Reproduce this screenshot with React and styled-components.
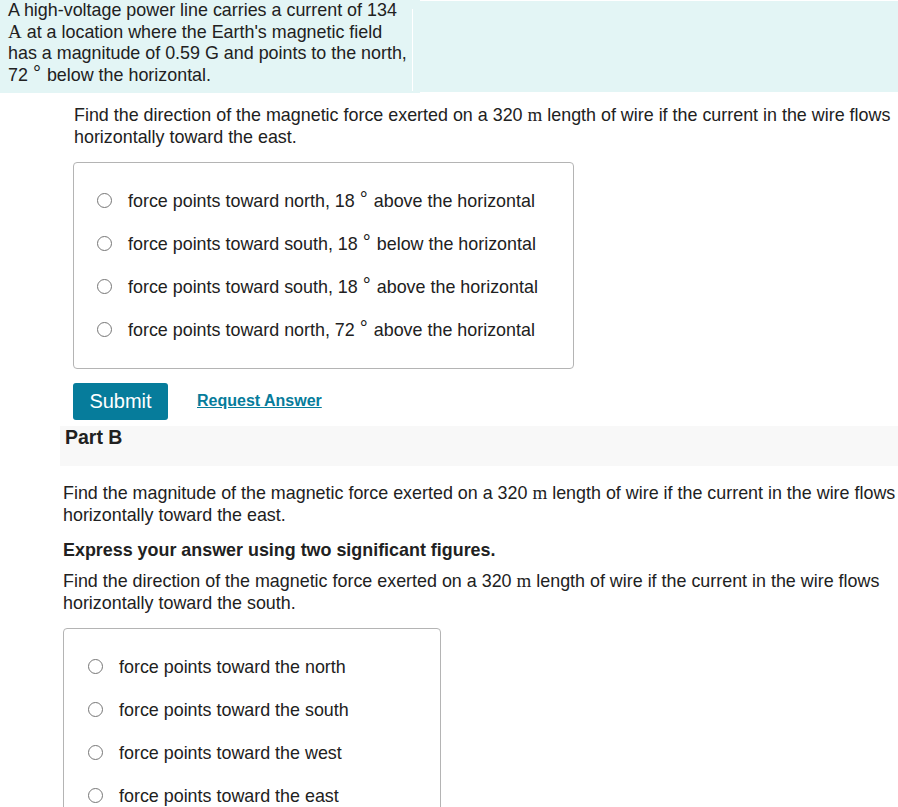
import React from "react";
import styled, { createGlobalStyle } from "styled-components";

const GlobalStyle = createGlobalStyle`
	body {
		margin: 0;
		background: #fff;
		font-family: "Liberation Sans", Arial, sans-serif;
		font-size: 17.9px;
		color: #212121;
	}
`;

const Page = styled.div`
	width: 898px;
	overflow: hidden;
`;

const IntroRow = styled.div`
	display: flex;
	align-items: stretch;
`;

const Intro = styled.div`
	position: relative;
	width: 405px;
	flex: none;
	padding: 0 7px 7px 8px;
	background: #e3f5f5;
	line-height: 21.5px;
	white-space: nowrap;

	&::after {
		content: "";
		position: absolute;
		right: 7px;
		top: 9px;
		bottom: 2px;
		width: 1px;
		background: #fff;
	}
`;

const IntroFill = styled.div`
	flex: 1;
	margin: 1px 0;
	background: #e3f5f5;
`;

const Math = styled.span`
	font-family: "Liberation Serif", "Times New Roman", serif;
	font-size: 19px;
	line-height: 0;
`;

const Deg = styled.span`
	font-size: 20px;
	line-height: 0;
	vertical-align: 1px;
	margin: 0 6px 0 5px;
`;

const Section = styled.div`
	padding-left: ${ props => props.indent }px;
`;

const Prompt = styled.p`
	margin: ${ props => props.top }px 0 0;
	line-height: 22px;
	white-space: nowrap;
	font-weight: ${ props => props.bold ? 700 : 400 };
`;

const Choices = styled.div`
	width: ${ props => props.width }px;
	margin-top: 14px;
	border: 1px solid #b4b4b4;
	border-radius: 4px;
	padding: 16px 0 17px;
	box-sizing: border-box;
`;

const Choice = styled.label`
	display: flex;
	align-items: center;
	height: 43px;
	padding-left: ${ props => props.pad }px;
	white-space: nowrap;
`;

const ChoiceText = styled.span`
	line-height: 22px;
`;

const Radio = styled.span`
	width: 15px;
	height: 15px;
	border: 1px solid #767676;
	border-radius: 50%;
	background: #fff;
	box-sizing: border-box;
	margin-right: 16px;
	flex: none;
`;

const Actions = styled.div`
	display: flex;
	align-items: center;
	gap: 29px;
	margin-top: 14px;
`;

const SubmitButton = styled.button`
	width: 95px;
	height: 37px;
	border: none;
	border-radius: 3px;
	background: #067c9b;
	color: #fff;
	font-family: "Liberation Sans", Arial, sans-serif;
	font-size: 20px;
	padding: 0;
`;

const RequestLink = styled.a`
	color: #067c9b;
	font-size: 16px;
	font-weight: 700;
	text-decoration: underline;
	margin-top: -2px;
`;

const PartHeader = styled.div`
	margin: 6px 0 0 60px;
	height: 40px;
	padding-left: 5px;
	background: #f8f8f8;
	font-weight: 700;
	font-size: 19.5px;
	line-height: 22px;
`;

const degreeChoices = [
	["north", "18", "above"],
	["south", "18", "below"],
	["south", "18", "above"],
	["north", "72", "above"],
];

const compassChoices = ["north", "south", "west", "east"];

const App = () => (
	<Page>
		<GlobalStyle />
		<IntroRow>
			<Intro>
				A high-voltage power line carries a current of 134<br />
				<Math>A</Math> at a location where the Earth's magnetic field<br />
				has a magnitude of 0.59 G and points to the north,<br />
				72<Deg>°</Deg>below the horizontal.
			</Intro>
			<IntroFill />
		</IntroRow>

		<Section indent = { 74 }>
			<Prompt top = { 11 }>
				Find the direction of the magnetic force exerted on a 320 <Math>m</Math> length of wire if the current in the wire flows<br />
				horizontally toward the east.
			</Prompt>
		</Section>

		<Section indent = { 73 }>
			<Choices width = { 501 }>
				{ degreeChoices.map(([dir, angle, side]) => (
					<Choice key = { dir + angle + side } pad = { 23 }>
						<Radio />
						<ChoiceText>
							force points toward { dir }, { angle }<Deg>°</Deg>{ side } the horizontal
						</ChoiceText>
					</Choice>
				)) }
			</Choices>

			<Actions>
				<SubmitButton>Submit</SubmitButton>
				<RequestLink href = "#">Request Answer</RequestLink>
			</Actions>
		</Section>

		<PartHeader>Part B</PartHeader>

		<Section indent = { 63 }>
			<Prompt top = { 16 }>
				Find the magnitude of the magnetic force exerted on a 320 <Math>m</Math> length of wire if the current in the wire flows<br />
				horizontally toward the east.
			</Prompt>
			<Prompt top = { 13 } bold>Express your answer using two significant figures.</Prompt>
			<Prompt top = { 9 }>
				Find the direction of the magnetic force exerted on a 320 <Math>m</Math> length of wire if the current in the wire flows<br />
				horizontally toward the south.
			</Prompt>
			<Choices width = { 378 }>
				{ compassChoices.map(dir => (
					<Choice key = { dir } pad = { 24 }>
						<Radio />
						<ChoiceText>force points toward the { dir }</ChoiceText>
					</Choice>
				)) }
			</Choices>
		</Section>
	</Page>
);

export default App;
